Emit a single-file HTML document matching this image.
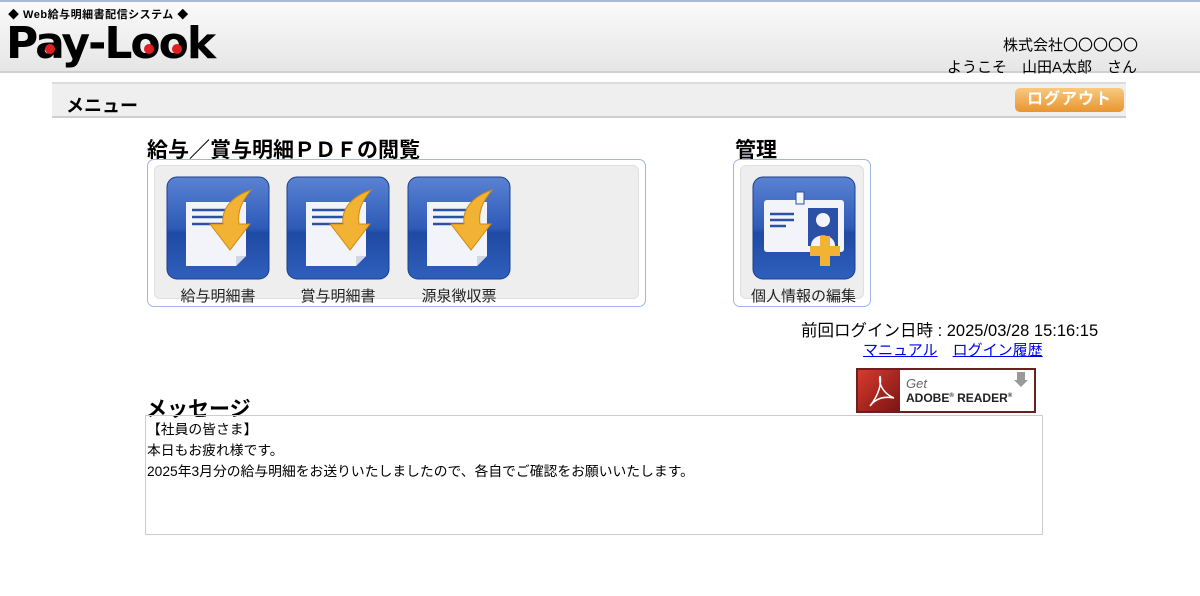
<!DOCTYPE html>
<html><head><meta charset="utf-8"><style>
*{margin:0;padding:0;box-sizing:border-box}
body{width:1200px;height:596px;background:#fff;font-family:"Liberation Sans","Noto Sans CJK JP",sans-serif;color:#000;position:relative;overflow:hidden}
.abs{position:absolute}
.hdr{left:0;top:0;width:1200px;height:73px;background:linear-gradient(180deg,#fafafa 0%,#f0f0f0 50%,#e6e6e6 100%);border-top:2px solid #a9b9d8;border-bottom:2px solid #d0d0d0}
.menu{left:52px;top:82px;width:1074px;height:36px;background:#efefef;border-top:2px solid #dcdcdc;border-bottom:2px solid #cfcfcf}
.btn{left:1015px;top:88px;width:109px;height:24px;border-radius:5px;background:linear-gradient(#f8c980,#e8952e);color:#fff;font-weight:bold;font-size:16px;text-align:center;line-height:24px;letter-spacing:1px}
.box{border:1px solid #9fb6e6;border-radius:7px;background:#fff}
.inner{background:#eeeeee;border:1px solid #e0e0e0;border-radius:6px}
.lbl{font-size:15px;text-align:center;width:110px;color:#222}
h2{font-size:21px;font-weight:bold;position:absolute}
a{color:#00e;text-decoration:underline}
</style></head><body>
<div class="abs hdr"></div>
<div class="abs" style="left:8px;top:6px;font-size:11px;font-weight:bold;letter-spacing:0.5px">◆ Web給与明細書配信システム ◆</div>
<div class="abs" style="left:6px;top:20px;font-size:44px;font-weight:bold;letter-spacing:-2px;line-height:48px;font-family:'DejaVu Sans','Liberation Sans',sans-serif">Pay-Look</div>
<svg class="abs" style="left:0;top:0" width="220" height="72"><circle cx="50" cy="49" r="5" fill="#e02020"/><circle cx="149" cy="49" r="5" fill="#e02020"/><circle cx="177" cy="49" r="5" fill="#e02020"/></svg>
<div class="abs" style="left:1003px;top:34px;font-size:15px">株式会社〇〇〇〇〇</div>
<div class="abs" style="left:947px;top:56px;font-size:15px">ようこそ　山田A太郎　さん</div>
<div class="abs menu"></div>
<div class="abs" style="left:66px;top:92px;font-size:18px;font-weight:bold">メニュー</div>
<div class="abs btn">ログアウト</div>

<h2 style="left:147px;top:134px">給与／賞与明細ＰＤＦの閲覧</h2>
<h2 style="left:735px;top:134px">管理</h2>
<div class="abs box" style="left:147px;top:159px;width:499px;height:148px"></div>
<div class="abs inner" style="left:154px;top:165px;width:485px;height:134px"></div>
<div class="abs box" style="left:733px;top:159px;width:138px;height:148px"></div>
<div class="abs inner" style="left:740px;top:165px;width:124px;height:134px"></div>

<svg width="0" height="0" style="position:absolute"><defs>
<linearGradient id="bg" x1="0" y1="0" x2="0" y2="1"><stop offset="0" stop-color="#5a82d2"/><stop offset="0.5" stop-color="#2e5bb8"/><stop offset="0.55" stop-color="#1f4aa3"/><stop offset="1" stop-color="#2f5fbd"/></linearGradient>
</defs></svg>

<svg class="abs" style="left:166px;top:176px" width="104" height="104"><rect x="1" y="1" width="102" height="102" rx="10" fill="url(#bg)" stroke="#1d3f8a"/><path d="M20 26h60v54l-10 10h-50z" fill="#f2f4fa"/><path d="M70 90l0-10h10z" fill="#cfd6e6"/><path d="M26 34h40M26 41h40M26 48h32" stroke="#2a50a8" stroke-width="2.5"/><path d="M85 14c-8 10-14 20-12 34h11l-20 26-20-26h13c-2-16 10-28 28-34z" fill="#f2b233" stroke="#d08a10"/></svg>
<svg class="abs" style="left:286px;top:176px" width="104" height="104"><rect x="1" y="1" width="102" height="102" rx="10" fill="url(#bg)" stroke="#1d3f8a"/><path d="M20 26h60v54l-10 10h-50z" fill="#f2f4fa"/><path d="M70 90l0-10h10z" fill="#cfd6e6"/><path d="M26 34h40M26 41h40M26 48h32" stroke="#2a50a8" stroke-width="2.5"/><path d="M85 14c-8 10-14 20-12 34h11l-20 26-20-26h13c-2-16 10-28 28-34z" fill="#f2b233" stroke="#d08a10"/></svg>
<svg class="abs" style="left:407px;top:176px" width="104" height="104"><rect x="1" y="1" width="102" height="102" rx="10" fill="url(#bg)" stroke="#1d3f8a"/><path d="M20 26h60v54l-10 10h-50z" fill="#f2f4fa"/><path d="M70 90l0-10h10z" fill="#cfd6e6"/><path d="M26 34h40M26 41h40M26 48h32" stroke="#2a50a8" stroke-width="2.5"/><path d="M85 14c-8 10-14 20-12 34h11l-20 26-20-26h13c-2-16 10-28 28-34z" fill="#f2b233" stroke="#d08a10"/></svg>
<svg class="abs" style="left:752px;top:176px" width="104" height="104"><rect x="1" y="1" width="102" height="102" rx="10" fill="url(#bg)" stroke="#1d3f8a"/><rect x="12" y="24" width="80" height="52" rx="3" fill="#f2f4fa"/><rect x="44" y="16" width="8" height="12" fill="#f2f4fa" stroke="#2a50a8"/><path d="M18 38h24M18 44h24M18 50h16" stroke="#2a50a8" stroke-width="2.5"/><rect x="56" y="32" width="30" height="38" fill="#2a50a8"/><circle cx="71" cy="44" r="7" fill="#f2f4fa"/><path d="M59 70c0-14 24-14 24 0z" fill="#f2f4fa"/><path d="M68 60h10v10h10v10h-10v10h-10v-10h-10v-10h10z" fill="#f2b233"/></svg>
<div class="abs lbl" style="left:163px;top:285px">給与明細書</div>
<div class="abs lbl" style="left:283px;top:285px">賞与明細書</div>
<div class="abs lbl" style="left:404px;top:285px">源泉徴収票</div>
<div class="abs lbl" style="left:749px;top:285px;width:115px;left:746px">個人情報の編集</div>

<div class="abs" style="left:801px;top:317px;font-size:16.5px">前回ログイン日時 : 2025/03/28 15:16:15</div>
<div class="abs" style="left:863px;top:339px;font-size:15px"><a>マニュアル</a>　<a>ログイン履歴</a></div>
<div class="abs" style="left:856px;top:368px;width:180px;height:45px;border:2px solid #6b1f1f;background:#fff"></div>
<div class="abs" style="left:858px;top:370px;width:42px;height:41px;background:linear-gradient(135deg,#d93a2e,#7a1414)"></div>
<svg class="abs" style="left:858px;top:370px" width="42" height="41"><path d="M12 36c8-10 12-22 10-30-2 8 4 18 14 22-10-2-18 0-24 8z" fill="none" stroke="#fff" stroke-width="1.5"/></svg>
<div class="abs" style="left:906px;top:376px;font-size:13px;font-style:italic;color:#666">Get</div>
<div class="abs" style="left:906px;top:391px;font-size:12px;font-weight:bold;color:#222">ADOBE<sup style="font-size:6px">®</sup> READER<sup style="font-size:6px">®</sup></div>
<div class="abs" style="left:1017px;top:372px;width:8px;height:8px;background:#999"></div>
<div class="abs" style="left:1014px;top:380px;width:0;height:0;border-left:7px solid transparent;border-right:7px solid transparent;border-top:7px solid #999"></div>

<h2 style="left:146px;top:393px">メッセージ</h2>
<div class="abs" style="left:145px;top:415px;width:898px;height:120px;border:1px solid #ccc;font-size:13.8px;line-height:21px;padding:3px 1px">【社員の皆さま】<br>本日もお疲れ様です。<br>2025年3月分の給与明細をお送りいたしましたので、各自でご確認をお願いいたします。</div>
</body></html>
